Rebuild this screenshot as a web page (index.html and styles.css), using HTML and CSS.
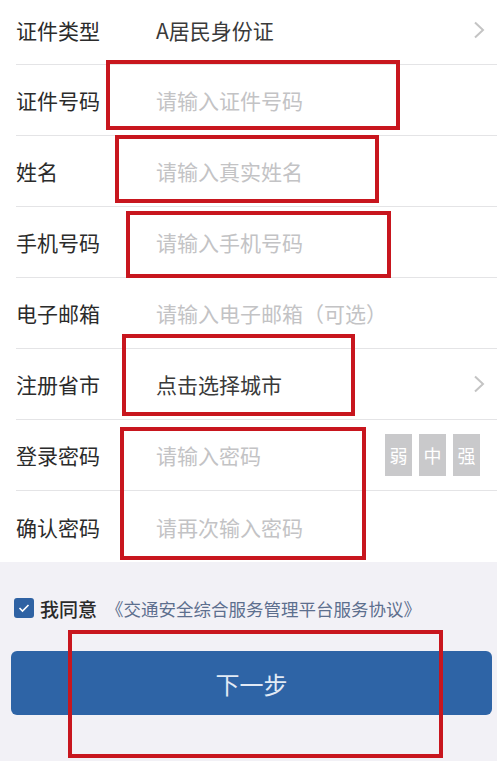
FILE: index.html
```html
<!DOCTYPE html>
<html lang="zh-CN">
<head>
<meta charset="utf-8">
<title>注册</title>
<link rel="stylesheet" href="styles.css">
</head>
<body>
<div class="page">
  <div class="form">
    <div class="row first">
      <span class="label">证件类型</span>
      <span class="value">A居民身份证</span>
      <svg class="chev" width="12" height="18" viewBox="0 0 12 18"><path d="M2 1.5 L10 9 L2 16.5" fill="none" stroke="#c4c4c4" stroke-width="2"/></svg>
    </div>
    <div class="row">
      <span class="label">证件号码</span>
      <span class="value ph">请输入证件号码</span>
    </div>
    <div class="row">
      <span class="label">姓名</span>
      <span class="value ph">请输入真实姓名</span>
    </div>
    <div class="row">
      <span class="label">手机号码</span>
      <span class="value ph">请输入手机号码</span>
    </div>
    <div class="row">
      <span class="label">电子邮箱</span>
      <span class="value ph">请输入电子邮箱（可选）</span>
    </div>
    <div class="row">
      <span class="label">注册省市</span>
      <span class="value">点击选择城市</span>
      <svg class="chev" width="12" height="18" viewBox="0 0 12 18"><path d="M2 1.5 L10 9 L2 16.5" fill="none" stroke="#c4c4c4" stroke-width="2"/></svg>
    </div>
    <div class="row">
      <span class="label">登录密码</span>
      <span class="value ph">请输入密码</span>
      <div class="strength">
        <span class="lvl">弱</span>
        <span class="lvl">中</span>
        <span class="lvl">强</span>
      </div>
    </div>
    <div class="row last">
      <span class="label">确认密码</span>
      <span class="value ph">请再次输入密码</span>
    </div>
  </div>

  <div class="agree">
    <span class="check">
      <svg width="12" height="10" viewBox="0 0 12 10"><path d="M1.5 5 L4.5 8 L10.5 2" fill="none" stroke="#fff" stroke-width="1.6"/></svg>
    </span>
    <span class="agree-text">我同意</span>
    <span class="agree-link">《交通安全综合服务管理平台服务协议》</span>
  </div>

  <button class="next">下一步</button>

  <div class="mark m1"></div>
  <div class="mark m2"></div>
  <div class="mark m3"></div>
  <div class="mark m4"></div>
  <div class="mark m5"></div>
  <div class="mark m6"></div>
</div>
</body>
</html>
```
FILE: styles.css
```css
html, body {
  margin: 0;
  padding: 0;
  background: #f2f1f6;
}
body {
  font-family: "Noto Sans CJK SC", "Noto Sans", sans-serif;
  width: 497px;
  height: 761px;
  overflow: hidden;
}
.page {
  position: relative;
  height: 761px;
}
.form {
  background: #fff;
}
.row {
  display: flex;
  align-items: center;
  height: 70px;
  margin-left: 16px;
  border-bottom: 1px solid #e4e4e6;
  font-size: 21px;
}
.row.first {
  height: 59px;
  padding-bottom: 5px;
}
.row.last {
  border-bottom: none;
  height: 71px;
}
.label {
  width: 140px;
  color: #2b2b2b;
  flex: none;
}
.value {
  flex: 1;
  color: #3a3a3a;
}
.value.ph {
  color: #c3c3c5;
}
.chev {
  margin-right: 12px;
  flex: none;
}
.strength {
  display: flex;
  gap: 7px;
  margin-right: 17px;
}
.lvl {
  width: 27px;
  height: 42px;
  background: #c9c9cb;
  color: #fff;
  font-size: 18px;
  display: flex;
  align-items: center;
  justify-content: center;
}
.agree {
  display: flex;
  align-items: center;
  margin-top: 36px;
  padding-left: 14px;
  height: 20px;
}
.check {
  width: 20px;
  height: 20px;
  border-radius: 3px;
  background: #2f62a3;
  display: flex;
  align-items: center;
  justify-content: center;
  flex: none;
}
.agree-text {
  margin-left: 6px;
  font-size: 19px;
  color: #2a2a2a;
  font-weight: 500;
}
.agree-link {
  margin-left: 9px;
  font-size: 17.5px;
  color: #5d6f8e;
}
.next {
  display: block;
  margin: 33px 0 0 11px;
  width: 481px;
  height: 64px;
  border: none;
  border-radius: 6px;
  background: #2e64a6;
  color: #e2eaf5;
  font-family: "Noto Sans CJK SC", "Noto Sans", sans-serif;
  font-size: 24px;
  padding: 0;
}
.mark {
  position: absolute;
  border: 4px solid #c8161e;
  box-sizing: border-box;
}
.m1 { left: 106px; top: 60px; width: 294px; height: 70px; }
.m2 { left: 115px; top: 135px; width: 264px; height: 68px; }
.m3 { left: 126px; top: 211px; width: 265px; height: 67px; }
.m4 { left: 122px; top: 334px; width: 233px; height: 82px; }
.m5 { left: 120px; top: 427px; width: 246px; height: 133px; }
.m6 { left: 68px; top: 630px; width: 375px; height: 128px; }
```
